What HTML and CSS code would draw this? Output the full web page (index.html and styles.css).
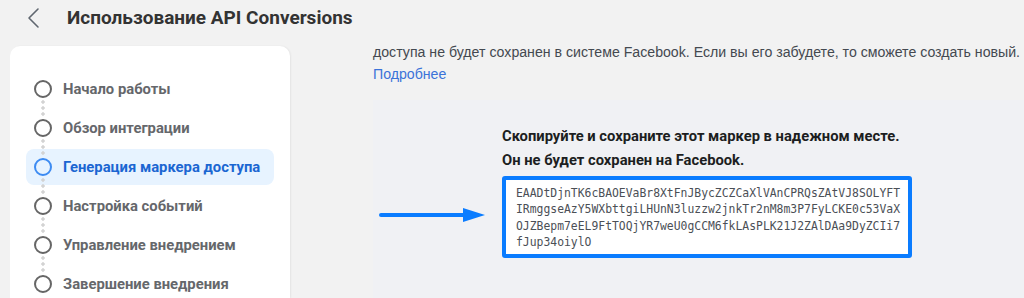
FILE: index.html
```html
<!DOCTYPE html>
<html lang="ru">
<head>
<meta charset="utf-8">
<link rel="stylesheet" href="styles.css">
</head>
<body>
<header class="topbar">
  <svg class="back" width="14" height="22" viewBox="0 0 14 22"><path d="M12 2 L3 11 L12 20" fill="none" stroke="#606770" stroke-width="1.6" stroke-linecap="round" stroke-linejoin="round"/></svg>
  <h1 class="title">Использование API Conversions</h1>
</header>
<div class="layout">
  <aside class="sidebar">
    <ul class="steps">
      <li class="step"><span class="dot"></span>Начало работы</li>
      <li class="step"><span class="dot"></span>Обзор интеграции</li>
      <li class="step active"><span class="dot"></span>Генерация маркера доступа</li>
      <li class="step"><span class="dot"></span>Настройка событий</li>
      <li class="step"><span class="dot"></span>Управление внедрением</li>
      <li class="step"><span class="dot"></span>Завершение внедрения</li>
    </ul>
  </aside>
  <main class="main">
    <p class="intro">доступа не будет сохранен в системе Facebook. Если вы его забудете, то сможете создать новый.<br><a class="link" href="#">Подробнее</a></p>
    <section class="panel">
      <div class="spacer"></div>
      <p class="note">Скопируйте и сохраните этот маркер в надежном месте.<br>Он не будет сохранен на Facebook.</p>
      <svg class="arrow" width="108" height="16" viewBox="0 0 108 16"><line x1="2" y1="8" x2="86" y2="8" stroke="#0a7cff" stroke-width="4" stroke-linecap="round"/><polygon points="84,1 106,8 84,15" fill="#0a7cff"/></svg>
      <div class="token">EAADtDjnTK6cBAOEVaBr8XtFnJBycZCZCaXlVAnCPRQsZAtVJ8SOLYFTIRmggseAzY5WXbttgiLHUnN3luzzw2jnkTr2nM8m3P7FyLCKE0c53VaXOJZBepm7eEL9FtTOQjYR7weU0gCCM6fkLAsPLK21J2ZAlDAa9DyZCIi7fJup34oiylO</div>
    </section>
  </main>
</div>
</body>
</html>
```
FILE: styles.css
```css
* { box-sizing: border-box; }
html, body { margin: 0; padding: 0; }
body {
  width: 1024px;
  height: 298px;
  overflow: hidden;
  background: #f2f2f2;
  font-family: Roboto, "Liberation Sans", Arial, sans-serif;
}
.topbar {
  height: 35px;
  display: flex;
  align-items: center;
  padding-left: 26px;
}
.back { flex: none; }
.title {
  margin: 0 0 0 27px;
  font-size: 19px;
  font-weight: 700;
  color: #333;
}
.layout {
  display: flex;
  height: 252px;
  margin-top: 11px;
}
.sidebar {
  flex: none;
  width: 280px;
  height: 100%;
  margin-left: 10px;
  background: #fff;
  border-radius: 10px 10px 0 0;
  box-shadow: 1px 0 2px rgba(0,0,0,0.06);
  padding-top: 25px;
}
.steps {
  list-style: none;
  margin: 0 16px;
  padding: 0;
  display: flex;
  flex-direction: column;
  gap: 3px;
}
.step {
  position: relative;
  height: 36px;
  display: flex;
  align-items: center;
  padding-left: 8px;
  border-radius: 8px;
  font-size: 14.8px;
  font-weight: 700;
  color: #65676b;
}
.step + .step::before {
  content: "";
  position: absolute;
  left: 15px;
  top: -11px;
  width: 4px;
  height: 17px;
  background: radial-gradient(circle, #d3d3d3 1.5px, transparent 1.8px) 0 0 / 4px 6px repeat-y;
}
.dot {
  flex: none;
  width: 18px;
  height: 18px;
  border: 2px solid #666;
  border-radius: 50%;
  margin-right: 11px;
  background: #fff;
}
.step.active {
  background: #e7f3ff;
  color: #1b66d2;
}
.step.active .dot {
  border-color: #3d8bf2;
  background: transparent;
}
.main {
  flex: 1;
  margin-left: 83px;
  display: flex;
  flex-direction: column;
}
.intro {
  margin: -5px 0 0 0;
  font-family: "Liberation Sans", Arial, sans-serif;
  font-size: 14.15px;
  line-height: 22px;
  color: #444950;
}
.link {
  color: #3b73d9;
  text-decoration: none;
}
.panel {
  flex: 1;
  margin-top: 15px;
  background: #f0f1f4;
  display: grid;
  grid-template-columns: 129px auto;
  grid-template-rows: auto auto;
  align-content: start;
  padding-top: 24px;
}
.note {
  margin: 0 0 4px 0;
  font-size: 14.75px;
  font-weight: 700;
  line-height: 24px;
  color: #1c1e21;
}
.arrow {
  align-self: center;
  margin-left: 6px;
  margin-top: -4px;
}
.token {
  width: 410px;
  border: 4px solid #0a7cff;
  border-radius: 3px;
  background: #fff;
  padding: 5px 4px 3px 10px;
  font-family: "DejaVu Sans Mono", "Liberation Mono", monospace;
  font-size: 11.4px;
  line-height: 16.4px;
  color: #4b4f56;
  word-break: break-all;
}
```
